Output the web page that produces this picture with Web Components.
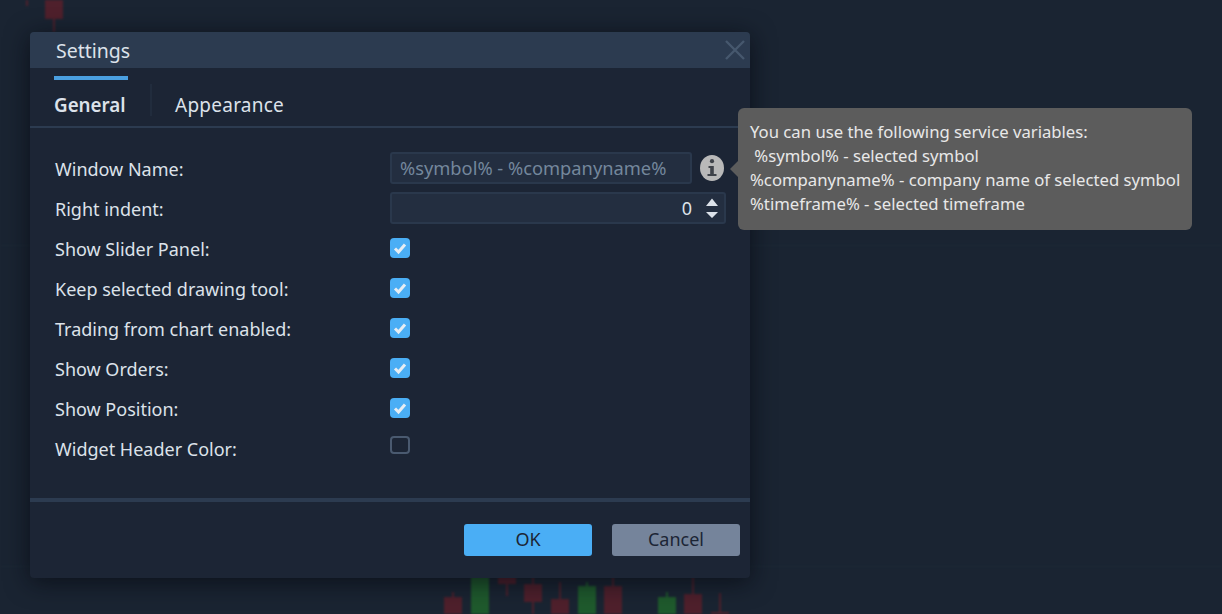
<!DOCTYPE html>
<html>
<head>
<meta charset="utf-8">
<title>Settings</title>
<style>
  html, body { margin: 0; height: 100%; background: #1a2432; overflow: hidden; }
  body { font-family: "Noto Sans", sans-serif; }
</style>
</head>
<body>
<chart-backdrop></chart-backdrop>
<settings-dialog heading="Settings">
  <tab-item slot="tabs" active>General</tab-item>
  <tab-item slot="tabs">Appearance</tab-item>

  <form-row label="Window Name:">
    <text-field value="%symbol% - %companyname%"></text-field>
    <info-icon></info-icon>
  </form-row>
  <form-row label="Right indent:"><number-field value="0"></number-field></form-row>
  <form-row label="Show Slider Panel:"><check-box checked></check-box></form-row>
  <form-row label="Keep selected drawing tool:"><check-box checked></check-box></form-row>
  <form-row label="Trading from chart enabled:"><check-box checked></check-box></form-row>
  <form-row label="Show Orders:"><check-box checked></check-box></form-row>
  <form-row label="Show Position:"><check-box checked></check-box></form-row>
  <form-row label="Widget Header Color:"><check-box raised></check-box></form-row>

  <action-button slot="actions" primary>OK</action-button>
  <action-button slot="actions">Cancel</action-button>
</settings-dialog>
<hint-tooltip>You can use the following service variables:
 %symbol% - selected symbol
%companyname% - company name of selected symbol
%timeframe% - selected timeframe</hint-tooltip>

<script>
function shadow(el, html) {
  const template = document.createElement('template')
  template.innerHTML = html
  el.attachShadow({ mode: 'open' })
  el.shadowRoot.appendChild(template.content.cloneNode(true))
}

// x, top of body, bottom of body, wick top, wick bottom
const CANDLES = [
  ['r', 45, 0, 19, 0, 32],
  ['r', 444, 597, 614, 592, 614],
  ['g', 471, 570, 614, 570, 614],
  ['r', 498, 570, 584, 570, 596],
  ['r', 524, 584, 602, 570, 614],
  ['r', 551, 599, 614, 582, 614],
  ['g', 578, 586, 614, 582, 614],
  ['r', 604, 586, 614, 570, 614],
  ['g', 658, 597, 614, 592, 614],
  ['r', 684, 594, 614, 570, 614],
  ['r', 711, 612, 620, 593, 620],
]

class ChartBackdrop extends HTMLElement {
  constructor() {
    super()
    const fill = { r: '#4f202c', g: '#1f5a2d' }
    const bars = CANDLES.map(([c, x, top, bottom, wt, wb]) =>
      `<rect x="${x + 8}" y="${wt}" width="2" height="${wb - wt}" fill="${fill[c]}"/>` +
      `<rect x="${x}" y="${top}" width="18" height="${bottom - top}" fill="${fill[c]}"/>`
    ).join('')
    shadow(this, `<style>
      :host { position: absolute; inset: 0; display: block; }
      svg { display: block; filter: blur(.8px); }
    </style>
    <svg width="1222" height="614" viewBox="0 0 1222 614">
      <rect x="26" y="0" width="2" height="6" fill="#4f202c"/>
      <path d="M0 245.5H1222M0 566.5H1222" stroke="#1e2937"/>
      ${bars}
    </svg>`)
  }
}
customElements.define('chart-backdrop', ChartBackdrop)

class SettingsDialog extends HTMLElement {
  constructor() {
    super()
    shadow(this, `<style>
      :host {
        position: absolute; left: 30px; top: 32px; width: 720px; height: 546px;
        display: flex; flex-direction: column;
        background: #1c2535; border-radius: 4px;
        box-shadow: 0 4px 24px rgba(5, 9, 16, .7);
        color: #dce2ea;
      }
      header {
        height: 36px; flex: none; box-sizing: border-box; padding-left: 26px;
        display: flex; align-items: center; justify-content: space-between;
        background: #2c3b50; border-radius: 4px 4px 0 0;
        font-size: 19.5px;
      }
      header svg { margin-right: 5px; }
      nav {
        height: 60px; flex: none; box-sizing: border-box;
        padding: 8px 0 0 24px; display: flex; align-items: flex-start;
        border-bottom: 2px solid #2c3b50;
      }
      main {
        flex: 1; box-sizing: border-box; padding: 20px 24px 0 25px;
        display: flex; flex-direction: column;
      }
      footer {
        height: 80px; flex: none; box-sizing: border-box;
        border-top: 4px solid #2c3b50; padding: 22px 10px 0 0;
        display: flex; justify-content: flex-end; gap: 20px;
      }
    </style>
    <header>
      <span></span>
      <svg width="20" height="20" viewBox="0 0 20 20"><path d="M1 1L19 19M19 1L1 19" stroke="#46586e" stroke-width="2.4" fill="none"/></svg>
    </header>
    <nav><slot name="tabs"></slot></nav>
    <main><slot></slot></main>
    <footer><slot name="actions"></slot></footer>`)
    this.shadowRoot.querySelector('header span').textContent = this.getAttribute('heading')
  }
}
customElements.define('settings-dialog', SettingsDialog)

class TabItem extends HTMLElement {
  constructor() {
    super()
    shadow(this, `<style>
      :host {
        display: block; box-sizing: border-box; height: 44px; padding: 13px 0 0 1px;
        border-top: 4px solid transparent; font-size: 19px; line-height: 24px;
        letter-spacing: .25px; color: #dce2ea;
      }
      :host([active]) {
        width: 74px; border-top-color: #4a9fe0; font-weight: 600; margin-right: 22px;
        font-size: 18.800px; letter-spacing: 0; padding-left: 0;
      }
      :host(:not([active])) { position: relative; padding-left: 25px; }
      :host(:not([active]))::before {
        content: ""; position: absolute; left: 0; top: 4px; width: 2px; height: 32px; background: #212c3d;
      }
    </style><slot></slot>`)
  }
}
customElements.define('tab-item', TabItem)

class FormRow extends HTMLElement {
  constructor() {
    super()
    shadow(this, `<style>
      :host {
        display: grid; grid-template-columns: 335px 1fr; align-items: center;
        height: 40px; font-size: 18px;
      }
      span { padding-top: 1px; }
      div { display: flex; align-items: center; gap: 8px; }
    </style><span></span><div><slot></slot></div>`)
    this.shadowRoot.querySelector('span').textContent = this.getAttribute('label')
  }
}
customElements.define('form-row', FormRow)

const fieldStyle = `
  box-sizing: border-box; height: 32px; background: #232e40;
  border: 2px solid #2a384c; border-radius: 3px;`

class TextField extends HTMLElement {
  constructor() {
    super()
    shadow(this, `<style>
      :host {
        display: block; width: 302px; ${fieldStyle}
        padding-left: 8px; font-size: 18.300px; line-height: 28px; color: #74879c; white-space: pre;
      }
    </style><span></span>`)
    this.shadowRoot.querySelector('span').textContent = this.getAttribute('value')
  }
}
customElements.define('text-field', TextField)

class NumberField extends HTMLElement {
  constructor() {
    super()
    shadow(this, `<style>
      :host {
        display: flex; align-items: center; justify-content: flex-end;
        width: 336px; ${fieldStyle} padding-right: 6px;
        font-size: 18px; color: #dce2ea;
      }
      svg { margin-left: 10px; }
    </style><span></span>
    <svg width="16" height="22" viewBox="0 0 16 22">
      <path d="M10 1.500L16 9H4Z M4 15H16L10 21Z" fill="#dce2ea"/>
    </svg>`)
    this.shadowRoot.querySelector('span').textContent = this.getAttribute('value')
  }
}
customElements.define('number-field', NumberField)

class InfoIcon extends HTMLElement {
  constructor() {
    super()
    shadow(this, `<style>
      :host { display: block; width: 24px; height: 26px; }
      svg { display: block; }
    </style>
    <svg width="24" height="26" viewBox="0 0 24 26">
      <ellipse cx="12" cy="13" rx="12" ry="13" fill="#b9b9b9"/>
      <circle cx="12" cy="6.200" r="2.100" fill="#3f434a"/>
      <path d="M8.500 11H13.800V19H16.500V21H7.500V19H10.200V13H8.500Z" fill="#3f434a"/>
    </svg>`)
  }
}
customElements.define('info-icon', InfoIcon)

class CheckBox extends HTMLElement {
  constructor() {
    super()
    shadow(this, `<style>
      :host {
        display: block; box-sizing: border-box; width: 20px; height: 18px;
        border: 2px solid #4a5a70; border-radius: 4px;
      }
      :host([raised]) { transform: translateY(-3px); }
      :host([checked]) { height: 20px; border: 0; background: #4aaef5; }
      svg { display: none; }
      :host([checked]) svg { display: block; }
    </style>
    <svg width="20" height="20" viewBox="0 0 20 20">
      <path d="M5 10.500L8.500 14L15 6.500" stroke="#e6edf3" stroke-width="3" fill="none"/>
    </svg>`)
  }
}
customElements.define('check-box', CheckBox)

class ActionButton extends HTMLElement {
  constructor() {
    super()
    shadow(this, `<style>
      :host {
        display: flex; align-items: center; justify-content: center;
        box-sizing: border-box; padding-bottom: 2px;
        width: 128px; height: 32px; border-radius: 3px;
        background: #75849b; color: #1c2535; font-size: 18px;
      }
      :host([primary]) { background: #4aaef5; }
    </style><slot></slot>`)
  }
}
customElements.define('action-button', ActionButton)

class HintTooltip extends HTMLElement {
  constructor() {
    super()
    shadow(this, `<style>
      :host {
        position: absolute; left: 738px; top: 108px; width: 454px; height: 122px;
        box-sizing: border-box; padding: 12px 0 0 12px;
        background: #5c5c5c; border-radius: 6px; color: #e8e8e8;
        font-size: 16.700px; line-height: 24px; white-space: pre;
      }
      :host::before {
        content: ""; position: absolute; left: -8px; top: 53px; width: 16px; height: 16px;
        background: #5c5c5c; clip-path: polygon(0 50%, 50% 0, 50% 100%);
      }
    </style><slot></slot>`)
  }
}
customElements.define('hint-tooltip', HintTooltip)
</script>
</body>
</html>
